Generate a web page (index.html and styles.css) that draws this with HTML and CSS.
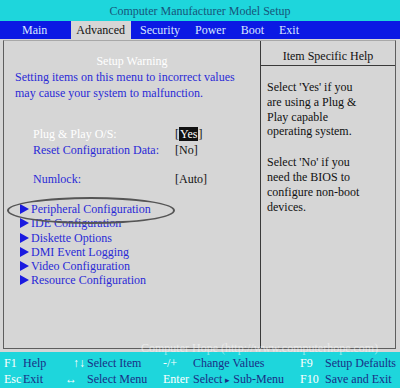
FILE: index.html
```html
<!DOCTYPE html>
<html lang="en">
<head>
  <meta charset="UTF-8">
  <title>Computer Manufacturer Model Setup</title>
  <link rel="stylesheet" href="styles.css">
</head>
<body>
  <div class="screen">
    <div class="title">Computer Manufacturer Model Setup</div>

    <div class="menubar">
      <span class="tab first">Main</span>
      <span class="tab active">Advanced</span>
      <span class="tab">Security</span>
      <span class="tab">Power</span>
      <span class="tab">Boot</span>
      <span class="tab">Exit</span>
    </div>

    <div class="main">
      <div class="frame">
        <div class="left">
          <div class="warn-title">Setup Warning</div>
          <div class="warn-text">
            Setting items on this menu to incorrect values<br>
            may cause your system to malfunction.
          </div>

          <div class="opt opt-first">
            <span class="opt-name current">Plug &amp; Play O/S:</span>
            <span class="opt-val">[<span class="sel">Yes</span>]</span>
          </div>
          <div class="opt">
            <span class="opt-name">Reset Configuration Data:</span>
            <span class="opt-val">[No]</span>
          </div>
          <div class="opt opt-gap">
            <span class="opt-name">Numlock:</span>
            <span class="opt-val">[Auto]</span>
          </div>

          <ul class="submenus">
            <li><i class="tri"></i>Peripheral Configuration</li>
            <li><i class="tri"></i>IDE Configuration</li>
            <li><i class="tri"></i>Diskette Options</li>
            <li><i class="tri"></i>DMI Event Logging</li>
            <li><i class="tri"></i>Video Configuration</li>
            <li><i class="tri"></i>Resource Configuration</li>
          </ul>
          <div class="circle"></div>
        </div>

        <div class="right">
          <div class="help-head">Item Specific Help</div>
          <div class="help-body">
            <p>Select 'Yes' if you<br>are using a Plug &amp;<br>Play capable<br>operating system.</p>
            <p>Select 'No' if you<br>need the BIOS to<br>configure non-boot<br>devices.</p>
          </div>
        </div>
      </div>
    </div>

    <div class="keys">
      <span class="k">F1</span><span class="d">Help</span>
      <span class="k k2">↑↓</span><span class="d">Select Item</span>
      <span class="k">-/+</span><span class="d">Change Values</span>
      <span class="k">F9</span><span class="d">Setup Defaults</span>

      <span class="k">Esc</span><span class="d">Exit</span>
      <span class="k">↔</span><span class="d">Select Menu</span>
      <span class="k">Enter</span><span class="d">Select <small>▸</small> Sub-Menu</span>
      <span class="k">F10</span><span class="d">Save and Exit</span>
    </div>

    <div class="watermark">Computer Hope (http://www.computerhope.com)</div>
  </div>
</body>
</html>
```

FILE: styles.css
```css
html, body {
  margin: 0;
  padding: 0;
  background: #d6d6d6;
  font-family: 'Liberation Serif', 'Times New Roman', serif;
  font-size: 12px;
}
.screen {
  width: 400px;
  height: 388px;
  position: relative;
  overflow: hidden;
  display: flex;
  flex-direction: column;
}
.title {
  height: 21px;
  line-height: 22px;
  background: #1ed6dc;
  color: #17557a;
  text-align: center;
}
.menubar {
  height: 18px;
  background: #0b19e4;
  display: flex;
  align-items: stretch;
  padding-left: 17px;
  gap: 4px;
}
.tab {
  color: #d8e6ff;
  line-height: 18px;
  padding: 0 6px 0 5px;
}
.tab.first {
  margin-right: 14px;
}
.tab.active {
  background: #d6d6d6;
  color: #111;
}
.main {
  flex: 1;
  padding: 1px 4px 3px 3px;
  background: #d6d6d6;
}
.frame {
  height: 100%;
  box-sizing: border-box;
  border: 1px solid #5e5e5e;
  border-top-color: #a8a8a8;
  display: flex;
}
.left {
  width: 257px;
  border-right: 1px solid #3a3a3a;
  position: relative;
  padding-left: 11px;
  box-sizing: border-box;
}
.warn-title {
  color: #fff;
  text-align: center;
  margin-top: 12px;
  line-height: 16px;
  padding-right: 11px;
}
.warn-text {
  color: #2a2ad6;
  line-height: 16px;
}
.opt {
  display: flex;
  line-height: 16px;
  padding-left: 18px;
}
.opt-first {
  margin-top: 25px;
}
.opt-gap {
  margin-top: 13px;
}
.opt-name {
  width: 142px;
  color: #2a2ad6;
}
.opt-name.current {
  color: #fff;
}
.opt-val {
  color: #111;
}
.sel {
  background: #111;
  color: #fff;
  padding: 0 1px;
}
.submenus {
  list-style: none;
  margin: 15px 0 0;
  padding: 0 0 0 5px;
  color: #2a2ad6;
  line-height: 14.3px;
}
.tri {
  display: inline-block;
  width: 0;
  height: 0;
  border-top: 5px solid transparent;
  border-bottom: 5px solid transparent;
  border-left: 9px solid #1a1ae0;
  margin-right: 2px;
  vertical-align: -1px;
}
.circle {
  position: absolute;
  left: 3px;
  top: 156px;
  width: 164px;
  height: 23px;
  border: 2px solid #555;
  border-radius: 50%;
}
.right {
  flex: 1;
}
.help-head {
  height: 18px;
  padding-top: 6px;
  line-height: 18px;
  border-bottom: 1px solid #3a3a3a;
  text-align: center;
  color: #111;
}
.help-body {
  padding: 14px 0 0 6px;
  color: #111;
  line-height: 14.8px;
}
.help-body p {
  margin: 0 0 16px;
}
.keys {
  height: 36px;
  background: #1ed6dc;
  box-sizing: border-box;
  padding: 3px 0 0 4px;
  display: grid;
  grid-template-columns: 19px 42px 22px 76px 30px 107px 25px 1fr;
  grid-auto-rows: 16px;
  line-height: 16px;
  white-space: nowrap;
}
.k {
  color: #fff;
}
.k2 {
  padding-left: 8px;
}
.d {
  color: #1a2f86;
}
.d small {
  font-size: 9px;
}
.watermark {
  position: absolute;
  left: 141px;
  top: 341px;
  line-height: 14px;
  color: rgba(255, 255, 255, 0.5);
  white-space: nowrap;
}
```
